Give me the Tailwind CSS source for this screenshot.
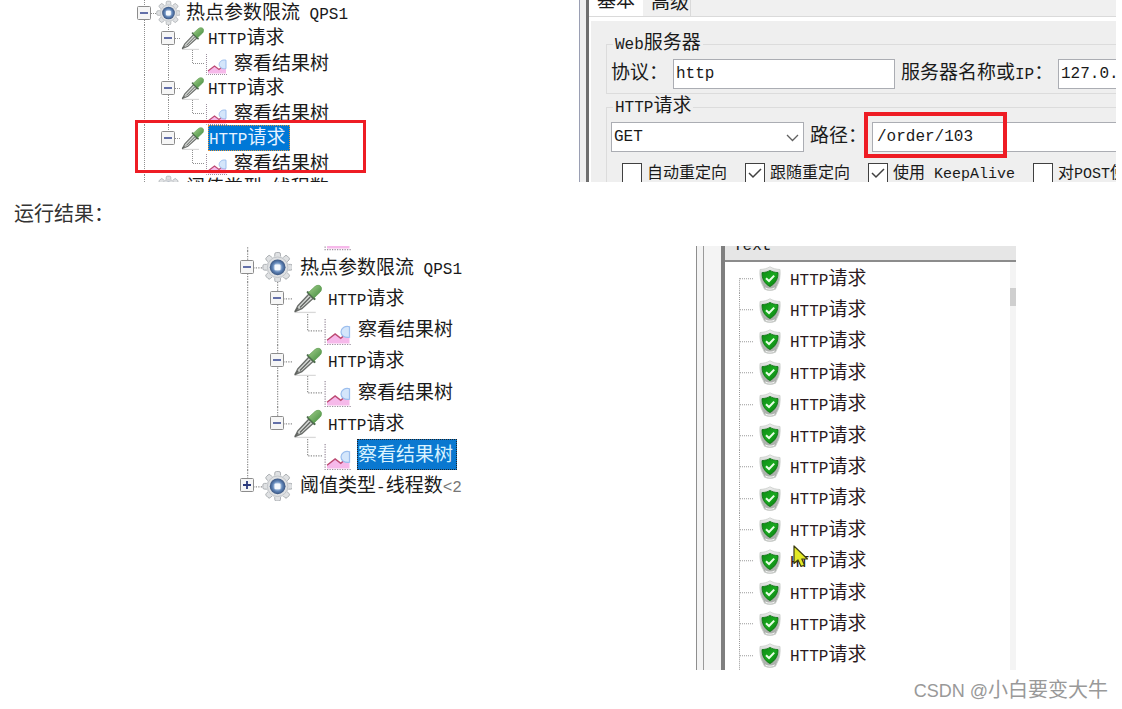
<!DOCTYPE html>
<html lang="zh-CN">
<head>
  <meta charset="UTF-8" />
  <meta name="viewport" content="width=device-width, initial-scale=1.0" />
  <title>运行结果</title>
  <script src="https://cdn.jsdelivr.net/npm/@tailwindcss/browser@4"></script>
  <style>
    body { font-family: "Liberation Sans", "Noto Sans CJK SC", sans-serif; }
    .swing { font-family: "Liberation Mono", "Noto Sans CJK SC", monospace; }
  </style>
</head>
<body class="bg-white text-[#1a1a1a]">

  <!-- ICONS -->
  <svg class="absolute size-0" aria-hidden="true">
    <defs>
      <radialGradient id="hub"><stop offset="0.3" stop-color="#b9cfe8" /><stop offset="0.65" stop-color="#5d82b5" /><stop offset="1" stop-color="#39547f" /></radialGradient>
      <linearGradient id="bulb" x1="0" y1="0" x2="1" y2="1"><stop offset="0" stop-color="#a5d08c" /><stop offset="1" stop-color="#3f8a3c" /></linearGradient>
      <linearGradient id="rim" x1="0" y1="0" x2="0" y2="1"><stop offset="0" stop-color="#f1f1f1" /><stop offset="0.5" stop-color="#b4bab4" /><stop offset="1" stop-color="#a9ada9" /></linearGradient>
      <linearGradient id="green" x1="0" y1="0" x2="1" y2="1"><stop offset="0" stop-color="#0d8a14" /><stop offset="0.5" stop-color="#19a81f" /><stop offset="1" stop-color="#067a0d" /></linearGradient>
    </defs>
    <symbol id="line" viewBox="0 0 24 25" preserveAspectRatio="none">
      <path d="M12.5 0V25" stroke="#8f8f8f" stroke-dasharray="1 1" />
    </symbol>
    <symbol id="node" viewBox="0 0 24 25" preserveAspectRatio="none">
      <path d="M12.5 0V25M13 13.5H24" stroke="#8f8f8f" stroke-dasharray="1 1" fill="none" />
    </symbol>
    <symbol id="elbow" viewBox="0 0 24 25" preserveAspectRatio="none">
      <path d="M12.5 0V13M13 13.5H24" stroke="#8f8f8f" stroke-dasharray="1 1" fill="none" />
    </symbol>
    <symbol id="minus" viewBox="0 0 14 14">
      <rect x="0.5" y="0.5" width="13" height="13" rx="1" fill="#f6f6f6" stroke="#8c8c8c" />
      <path d="M3 7H11" stroke="#3f4f96" stroke-width="1.6" />
    </symbol>
    <symbol id="plus" viewBox="0 0 14 14">
      <rect x="0.5" y="0.5" width="13" height="13" rx="1" fill="#f6f6f6" stroke="#8c8c8c" />
      <path d="M3 7H11M7 3V11" stroke="#2c3a7c" stroke-width="1.8" />
    </symbol>
    <symbol id="gear" viewBox="0 0 24 25">
      <g fill="#dfe1e3" stroke="#a3a7ab" stroke-width="0.7">
        <rect x="10.2" y="1.2" width="4.6" height="23.6" rx="1.3" />
        <rect x="10.2" y="1.2" width="4.6" height="23.6" rx="1.3" transform="rotate(45 12.5 13)" />
        <rect x="10.2" y="1.2" width="4.6" height="23.6" rx="1.3" transform="rotate(90 12.5 13)" />
        <rect x="10.2" y="1.2" width="4.6" height="23.6" rx="1.3" transform="rotate(135 12.5 13)" />
      </g>
      <circle cx="12.5" cy="13" r="9" fill="#dfe1e3" />
      <circle cx="12.5" cy="13" r="8.2" fill="none" stroke="#c2c5c9" stroke-width="0.8" />
      <circle cx="12.5" cy="13" r="6.3" fill="url(#hub)" />
      <rect x="10" y="10.8" width="4.8" height="4.6" rx="0.8" fill="#f4f8fd" />
    </symbol>
    <symbol id="dropper" viewBox="0 0 24 25">
      <path d="M2 24.4H19" stroke="#d9d9d9" stroke-width="1.2" />
      <path d="M2.4 23.6L4.6 19.2L13.6 9.6L17 13L8 21.2Z" fill="#d5d8d5" stroke="#6b6e6b" stroke-width="1.1" stroke-linejoin="round" />
      <path d="M2.4 23.6L5 20.6M6.4 20.4L14.6 12" stroke="#5f625f" stroke-width="1" />
      <path d="M12.6 8.2L18 13.6" stroke="#4d6a4d" stroke-width="1.8" stroke-linecap="round" />
      <path d="M13.2 8.4L18.4 3.6C20 2.2 22.2 2.4 23.2 3.8C24 5.2 23.6 7 22.4 8.2L17.8 12.6Z" fill="url(#bulb)" stroke="#5f9d52" stroke-width="0.6" />
    </symbol>
    <symbol id="chart" viewBox="0 0 24 25">
      <path d="M2.5 4V24.5H24" fill="none" stroke="#9b8f9e" stroke-dasharray="1 1" />
      <path d="M4 23.6V21L10.5 16L15 19.4L22 15V23.6Z" fill="#f6b9ea" />
      <path d="M4 21L10.5 16L15 19.4L18.5 16.5" fill="none" stroke="#bd4b73" stroke-width="1.2" />
      <path d="M22 10.2C18.2 9.2 15.2 11.6 15.2 14.4C15.2 17 18 19.4 22 18.6Z" fill="#d4e6fb" stroke="#9dbfee" stroke-width="1" />
    </symbol>
    <symbol id="shield" viewBox="0 0 22 25">
      <path d="M11 0.8C13.5 2.4 17 3.3 21 3.5C21.6 10 20.5 16 18 20L16.5 23.2C13 24.8 9 24.8 5.5 23.2L4 20C1.5 16 0.4 10 1 3.5C5 3.3 8.5 2.4 11 0.8Z" fill="url(#rim)" stroke="#c9cdc9" stroke-width="0.8" />
      <path d="M6 21.2C9 23 13 23 16 21.2L15.2 23C12.5 24 9.5 24 6.8 23Z" fill="#f3f3f3" />
      <path d="M11 4.4C13.2 5.8 16 6.5 19 6.6C19.2 12.4 16.8 17.4 11 20.6C5.2 17.4 2.8 12.4 3 6.6C6 6.5 8.8 5.8 11 4.4Z" fill="url(#green)" stroke="#0b6e12" stroke-width="0.8" />
      <path d="M7 12.2L10 15L15.2 9.6" fill="none" stroke="#e8ffe6" stroke-width="2" />
    </symbol>
    <symbol id="stub" viewBox="0 0 24 31" preserveAspectRatio="none">
      <path d="M4.5 0V31M5 16.5H18" fill="none" stroke="#9a9a9a" stroke-dasharray="1 1" />
    </symbol>
    <symbol id="stub-first" viewBox="0 0 24 31" preserveAspectRatio="none">
      <path d="M4.5 16V31M5 16.5H18" fill="none" stroke="#9a9a9a" stroke-dasharray="1 1" />
    </symbol>
  </svg>

  <!-- TEST PLAN + REQUEST FORM -->
  <section class="swing relative mx-1.5 flex h-[182px] overflow-hidden text-[19px] leading-6">
    <ul class="relative grid h-[200px] w-[573px] shrink-0 auto-rows-fr pl-[126px] whitespace-nowrap">
      <li class="flex items-center">
        <div class="grid h-full w-6 place-items-center"><svg class="h-full w-6 [grid-area:1/1]"><use href="#node" /></svg><button aria-label="折叠" class="size-3.5 [grid-area:1/1]"><svg class="size-3.5"><use href="#minus" /></svg></button></div>
        <svg class="h-full w-6"><use href="#gear" /></svg>
        <span class="mt-1 ml-1.5">热点参数限流<span class="text-base leading-6"> QPS1</span></span>
      </li>
      <li class="flex items-center">
        <svg class="h-full w-6"><use href="#line" /></svg>
        <div class="grid h-full w-6 place-items-center"><svg class="h-full w-6 [grid-area:1/1]"><use href="#node" /></svg><button aria-label="折叠" class="size-3.5 [grid-area:1/1]"><svg class="size-3.5"><use href="#minus" /></svg></button></div>
        <svg class="h-full w-6"><use href="#dropper" /></svg>
        <span class="mt-1 ml-1"><span class="text-base leading-6">HTTP</span>请求</span>
      </li>
      <li class="flex items-center">
        <svg class="h-full w-6"><use href="#line" /></svg>
        <svg class="h-full w-6"><use href="#line" /></svg>
        <svg class="h-full w-6"><use href="#elbow" /></svg>
        <svg class="h-full w-6"><use href="#chart" /></svg>
        <span class="mt-1 ml-1.5">察看结果树</span>
      </li>
      <li class="flex items-center">
        <svg class="h-full w-6"><use href="#line" /></svg>
        <div class="grid h-full w-6 place-items-center"><svg class="h-full w-6 [grid-area:1/1]"><use href="#node" /></svg><button aria-label="折叠" class="size-3.5 [grid-area:1/1]"><svg class="size-3.5"><use href="#minus" /></svg></button></div>
        <svg class="h-full w-6"><use href="#dropper" /></svg>
        <span class="mt-1 ml-1"><span class="text-base leading-6">HTTP</span>请求</span>
      </li>
      <li class="flex items-center">
        <svg class="h-full w-6"><use href="#line" /></svg>
        <svg class="h-full w-6"><use href="#line" /></svg>
        <svg class="h-full w-6"><use href="#elbow" /></svg>
        <svg class="h-full w-6"><use href="#chart" /></svg>
        <span class="mt-1 ml-1.5">察看结果树</span>
      </li>
      <li class="flex items-center">
        <svg class="h-full w-6"><use href="#line" /></svg>
        <div class="grid h-full w-6 place-items-center"><svg class="h-full w-6 [grid-area:1/1]"><use href="#elbow" /></svg><button aria-label="折叠" class="size-3.5 [grid-area:1/1]"><svg class="size-3.5"><use href="#minus" /></svg></button></div>
        <svg class="h-full w-6"><use href="#dropper" /></svg>
        <span class="ml-1 border border-dotted border-[#e8953a] bg-[#0078d7] pt-[3px] pr-1 leading-5 text-[#e6f2ff]"><span class="text-base leading-5">HTTP</span>请求</span>
      </li>
      <li class="flex items-center">
        <svg class="h-full w-6"><use href="#line" /></svg>
        <span class="w-6"></span>
        <svg class="h-full w-6"><use href="#elbow" /></svg>
        <svg class="h-full w-6"><use href="#chart" /></svg>
        <span class="mt-1 ml-1.5">察看结果树</span>
      </li>
      <li class="flex items-center">
        <svg class="h-full w-6"><use href="#elbow" /></svg>
        <svg class="h-full w-6"><use href="#gear" /></svg>
        <span class="mt-1 ml-1.5">阈值类型<span class="text-base leading-6">-</span>线程数<span class="text-base leading-6">&lt;2</span></span>
      </li>
      <li class="absolute top-[120px] left-[129px] h-[53px] w-[231px] border-[3px] border-[#ee1c24]" aria-hidden="true"></li>
    </ul>

    <!-- Request form -->
    <div class="flex min-w-0 flex-1 border-l border-[#9a9fb3] bg-[#f0f0f0]">
      <div class="w-1.5 shrink-0"></div>
      <div class="min-w-0 flex-1 border-l-3 border-[#6f6f6f]">
        <div class="flex h-[17px] items-end overflow-hidden border-b border-[#dadada]">
          <button class="w-[54px] bg-white pb-1 pl-2 text-left leading-5">基本</button>
          <button class="w-12 border-r border-[#dadada] pb-0.5 pl-2 text-left leading-5">高级</button>
        </div>
        <div class="border-t-4 border-l-2 border-white bg-[#efefef] pt-[13px] pl-[15px] whitespace-nowrap">
          <fieldset class="min-w-0 border border-r-0 border-[#dcdcdc] pb-1 pl-1">
            <legend class="ml-0.5 px-0.5 leading-5"><span class="text-base leading-5">Web</span>服务器</legend>
            <div class="flex items-center pt-1">
              <label for="protocol" class="w-[62px] shrink-0">协议：</label>
              <input id="protocol" type="text" value="http" class="h-[30px] w-[222px] shrink-0 border border-[#abadb3] bg-white px-0.5 text-base" />
              <label for="server" class="ml-1.5 w-[157px] shrink-0">服务器名称或<span class="text-base">IP</span>：</label>
              <input id="server" type="text" value="127.0.0.1" class="h-[30px] min-w-0 flex-1 border border-r-0 border-[#abadb3] bg-white pl-0.5 text-base" />
            </div>
          </fieldset>
          <fieldset class="mt-[3px] min-w-0 border border-r-0 border-[#dcdcdc] pb-1 pl-1">
            <legend class="ml-0.5 px-0.5 leading-5"><span class="text-base leading-5">HTTP</span>请求</legend>
            <div class="flex items-center pt-1">
              <div class="relative w-[193px] shrink-0">
                <select aria-label="方法" class="block h-[30px] w-full appearance-none border border-[#abadb3] bg-white px-0.5 text-base"><option>GET</option></select>
                <svg class="pointer-events-none absolute top-3 right-1 h-2 w-4" viewBox="0 0 16 8" fill="none" stroke="#606060" stroke-width="1.3"><path d="M3 1L8.500 6.500L14 1" /></svg>
              </div>
              <label for="path" class="ml-1.5 w-[62px] shrink-0">路径：</label>
              <div class="relative min-w-0 flex-1">
                <input id="path" type="text" value="/order/103" class="block h-[30px] w-full border border-r-0 border-[#abadb3] bg-white pl-1 text-base" />
                <span class="pointer-events-none absolute -top-[10px] -left-[8px] h-[46px] w-[143px] border-4 border-[#ee1c24]"></span>
              </div>
            </div>
            <div class="mt-[11px] flex pl-[11px] text-base leading-[22px]">
              <label class="mr-[18px] flex gap-[5px]"><input type="checkbox" class="size-5 shrink-0 appearance-none border border-[#404040] bg-white" />自动重定向</label>
              <label class="mr-[18px] flex gap-[5px]"><span class="grid size-5"><input type="checkbox" checked class="size-5 appearance-none border border-[#404040] bg-white [grid-area:1/1]" /><svg class="pointer-events-none size-5 [grid-area:1/1]" viewBox="0 0 20 20" fill="none" stroke="#404040" stroke-width="1.5"><path d="M4 10L8 14L16 6" /></svg></span>跟随重定向</label>
              <label class="mr-[18px] flex gap-[5px]"><span class="grid size-5"><input type="checkbox" checked class="size-5 appearance-none border border-[#404040] bg-white [grid-area:1/1]" /><svg class="pointer-events-none size-5 [grid-area:1/1]" viewBox="0 0 20 20" fill="none" stroke="#404040" stroke-width="1.5"><path d="M4 10L8 14L16 6" /></svg></span><span>使用<span class="text-[15px]"> KeepAlive</span></span></label>
              <label class="flex gap-[5px]"><input type="checkbox" class="size-5 shrink-0 appearance-none border border-[#404040] bg-white" /><span>对<span class="text-[15px]">POST</span>使用</span></label>
            </div>
          </fieldset>
        </div>
      </div>
    </div>
  </section>

  <p class="h-16 px-3.5 pt-4 text-xl leading-8 text-[#333]">运行结果：</p>

  <!-- RESULTS -->
  <section class="swing mx-auto flex h-[424px] w-full max-w-[910px] overflow-hidden text-[19px] leading-[30px]">
    <div class="w-[590px] shrink-0 pl-[126px] whitespace-nowrap">
      <div class="flex h-[5px] items-end overflow-hidden">
        <svg class="h-[31px] w-[30px] shrink-0"><use href="#line" /></svg>
        <span class="w-[60px]"></span>
        <svg class="h-[33px] w-[30px] shrink-0"><use href="#chart" /></svg>
      </div>
      <ul class="grid h-[250px] auto-rows-fr">
        <li class="flex items-center">
          <div class="grid h-full w-[30px] place-items-center"><svg class="h-full w-[30px] [grid-area:1/1]"><use href="#node" /></svg><button aria-label="折叠" class="size-3.5 [grid-area:1/1]"><svg class="size-3.5"><use href="#minus" /></svg></button></div>
          <svg class="h-full w-[30px]"><use href="#gear" /></svg>
          <span class="mt-1 ml-2">热点参数限流<span class="text-base leading-6"> QPS1</span></span>
        </li>
        <li class="flex items-center">
          <svg class="h-full w-[30px]"><use href="#line" /></svg>
          <div class="grid h-full w-[30px] place-items-center"><svg class="h-full w-[30px] [grid-area:1/1]"><use href="#node" /></svg><button aria-label="折叠" class="size-3.5 [grid-area:1/1]"><svg class="size-3.5"><use href="#minus" /></svg></button></div>
          <svg class="h-full w-[30px]"><use href="#dropper" /></svg>
          <span class="mt-1 ml-1.5"><span class="text-base leading-6">HTTP</span>请求</span>
        </li>
        <li class="flex items-center">
          <svg class="h-full w-[30px]"><use href="#line" /></svg>
          <svg class="h-full w-[30px]"><use href="#line" /></svg>
          <svg class="h-full w-[30px]"><use href="#elbow" /></svg>
          <svg class="h-full w-[30px]"><use href="#chart" /></svg>
          <span class="mt-1 ml-1.5">察看结果树</span>
        </li>
        <li class="flex items-center">
          <svg class="h-full w-[30px]"><use href="#line" /></svg>
          <div class="grid h-full w-[30px] place-items-center"><svg class="h-full w-[30px] [grid-area:1/1]"><use href="#node" /></svg><button aria-label="折叠" class="size-3.5 [grid-area:1/1]"><svg class="size-3.5"><use href="#minus" /></svg></button></div>
          <svg class="h-full w-[30px]"><use href="#dropper" /></svg>
          <span class="mt-1 ml-1.5"><span class="text-base leading-6">HTTP</span>请求</span>
        </li>
        <li class="flex items-center">
          <svg class="h-full w-[30px]"><use href="#line" /></svg>
          <svg class="h-full w-[30px]"><use href="#line" /></svg>
          <svg class="h-full w-[30px]"><use href="#elbow" /></svg>
          <svg class="h-full w-[30px]"><use href="#chart" /></svg>
          <span class="mt-1 ml-1.5">察看结果树</span>
        </li>
        <li class="flex items-center">
          <svg class="h-full w-[30px]"><use href="#line" /></svg>
          <div class="grid h-full w-[30px] place-items-center"><svg class="h-full w-[30px] [grid-area:1/1]"><use href="#elbow" /></svg><button aria-label="折叠" class="size-3.5 [grid-area:1/1]"><svg class="size-3.5"><use href="#minus" /></svg></button></div>
          <svg class="h-full w-[30px]"><use href="#dropper" /></svg>
          <span class="mt-1 ml-1.5"><span class="text-base leading-6">HTTP</span>请求</span>
        </li>
        <li class="flex items-center">
          <svg class="h-full w-[30px]"><use href="#line" /></svg>
          <span class="w-[30px]"></span>
          <svg class="h-full w-[30px]"><use href="#elbow" /></svg>
          <svg class="h-full w-[30px]"><use href="#chart" /></svg>
          <span class="ml-[5px] border border-dotted border-[#222] bg-[#0a78d0] pt-[3px] pr-[3px] leading-[26px] text-[#d9f3ff]">察看结果树</span>
        </li>
        <li class="flex items-center">
          <div class="grid h-full w-[30px] place-items-center"><svg class="h-full w-[30px] [grid-area:1/1]"><use href="#elbow" /></svg><button aria-label="展开" class="size-3.5 [grid-area:1/1]"><svg class="size-3.5"><use href="#plus" /></svg></button></div>
          <svg class="h-full w-[30px]"><use href="#gear" /></svg>
          <span class="mt-1 ml-2">阈值类型<span class="text-base leading-6">-</span>线程数<span class="text-base leading-6 text-[#777]">&lt;2</span></span>
        </li>
      </ul>
    </div>

    <!-- Sample list -->
    <div class="flex min-w-0 flex-1 border-l border-[#8e8e8e] bg-[#f4f4f4]">
      <div class="w-[7px] shrink-0 border-r border-[#9a9a9a]"></div>
      <div class="w-[17px] shrink-0"></div>
      <div class="min-w-0 flex-1 border-l-4 border-[#7f7f7f]">
        <div class="flex h-4 items-end overflow-hidden border-b-2 border-[#8c8c8c] bg-[#e6e6e6] pb-1 pl-2 text-base leading-5">Text</div>
        <div class="flex h-[408px] bg-white">
          <ul class="relative grid flex-1 auto-rows-fr pl-2.5 whitespace-nowrap text-[#2a1a1e]">
            <li class="flex items-center"><svg class="h-full w-6"><use href="#stub-first" /></svg><svg class="mt-0.5 h-[25px] w-[22px]"><use href="#shield" /></svg><span class="mt-1 ml-[9px]"><span class="text-base leading-6">HTTP</span>请求</span></li>
            <li class="flex items-center"><svg class="h-full w-6"><use href="#stub" /></svg><svg class="mt-0.5 h-[25px] w-[22px]"><use href="#shield" /></svg><span class="mt-1 ml-[9px]"><span class="text-base leading-6">HTTP</span>请求</span></li>
            <li class="flex items-center"><svg class="h-full w-6"><use href="#stub" /></svg><svg class="mt-0.5 h-[25px] w-[22px]"><use href="#shield" /></svg><span class="mt-1 ml-[9px]"><span class="text-base leading-6">HTTP</span>请求</span></li>
            <li class="flex items-center"><svg class="h-full w-6"><use href="#stub" /></svg><svg class="mt-0.5 h-[25px] w-[22px]"><use href="#shield" /></svg><span class="mt-1 ml-[9px]"><span class="text-base leading-6">HTTP</span>请求</span></li>
            <li class="flex items-center"><svg class="h-full w-6"><use href="#stub" /></svg><svg class="mt-0.5 h-[25px] w-[22px]"><use href="#shield" /></svg><span class="mt-1 ml-[9px]"><span class="text-base leading-6">HTTP</span>请求</span></li>
            <li class="flex items-center"><svg class="h-full w-6"><use href="#stub" /></svg><svg class="mt-0.5 h-[25px] w-[22px]"><use href="#shield" /></svg><span class="mt-1 ml-[9px]"><span class="text-base leading-6">HTTP</span>请求</span></li>
            <li class="flex items-center"><svg class="h-full w-6"><use href="#stub" /></svg><svg class="mt-0.5 h-[25px] w-[22px]"><use href="#shield" /></svg><span class="mt-1 ml-[9px]"><span class="text-base leading-6">HTTP</span>请求</span></li>
            <li class="flex items-center"><svg class="h-full w-6"><use href="#stub" /></svg><svg class="mt-0.5 h-[25px] w-[22px]"><use href="#shield" /></svg><span class="mt-1 ml-[9px]"><span class="text-base leading-6">HTTP</span>请求</span></li>
            <li class="flex items-center"><svg class="h-full w-6"><use href="#stub" /></svg><svg class="mt-0.5 h-[25px] w-[22px]"><use href="#shield" /></svg><span class="mt-1 ml-[9px]"><span class="text-base leading-6">HTTP</span>请求</span></li>
            <li class="flex items-center"><svg class="h-full w-6"><use href="#stub" /></svg><svg class="mt-0.5 h-[25px] w-[22px]"><use href="#shield" /></svg><span class="mt-1 ml-[9px]"><span class="text-base leading-6">HTTP</span>请求</span></li>
            <li class="flex items-center"><svg class="h-full w-6"><use href="#stub" /></svg><svg class="mt-0.5 h-[25px] w-[22px]"><use href="#shield" /></svg><span class="mt-1 ml-[9px]"><span class="text-base leading-6">HTTP</span>请求</span></li>
            <li class="flex items-center"><svg class="h-full w-6"><use href="#stub" /></svg><svg class="mt-0.5 h-[25px] w-[22px]"><use href="#shield" /></svg><span class="mt-1 ml-[9px]"><span class="text-base leading-6">HTTP</span>请求</span></li>
            <li class="flex items-center"><svg class="h-full w-6"><use href="#stub" /></svg><svg class="mt-0.5 h-[25px] w-[22px]"><use href="#shield" /></svg><span class="mt-1 ml-[9px]"><span class="text-base leading-6">HTTP</span>请求</span></li>
            <li class="absolute top-[283px] left-[68px]" aria-hidden="true">
              <svg class="h-6 w-4" viewBox="0 0 16 24" fill="#e3ea25" stroke="#3c3d12" stroke-width="1.2" stroke-linejoin="round"><path d="M1 1V18.500L5 15L8 21.500L11.500 20L8.800 14H14.500Z" /></svg>
            </li>
          </ul>
          <div class="w-1.5 bg-[#f4f4f4] pt-[26px]"><div class="h-[18px] bg-[#cfcfcf]"></div></div>
        </div>
      </div>
    </div>
  </section>

  <footer class="flex justify-end px-3.5 pt-1 text-xl leading-8 text-[#999]"><span><span class="text-lg">CSDN @</span>小白要变大牛</span></footer>

</body>
</html>
